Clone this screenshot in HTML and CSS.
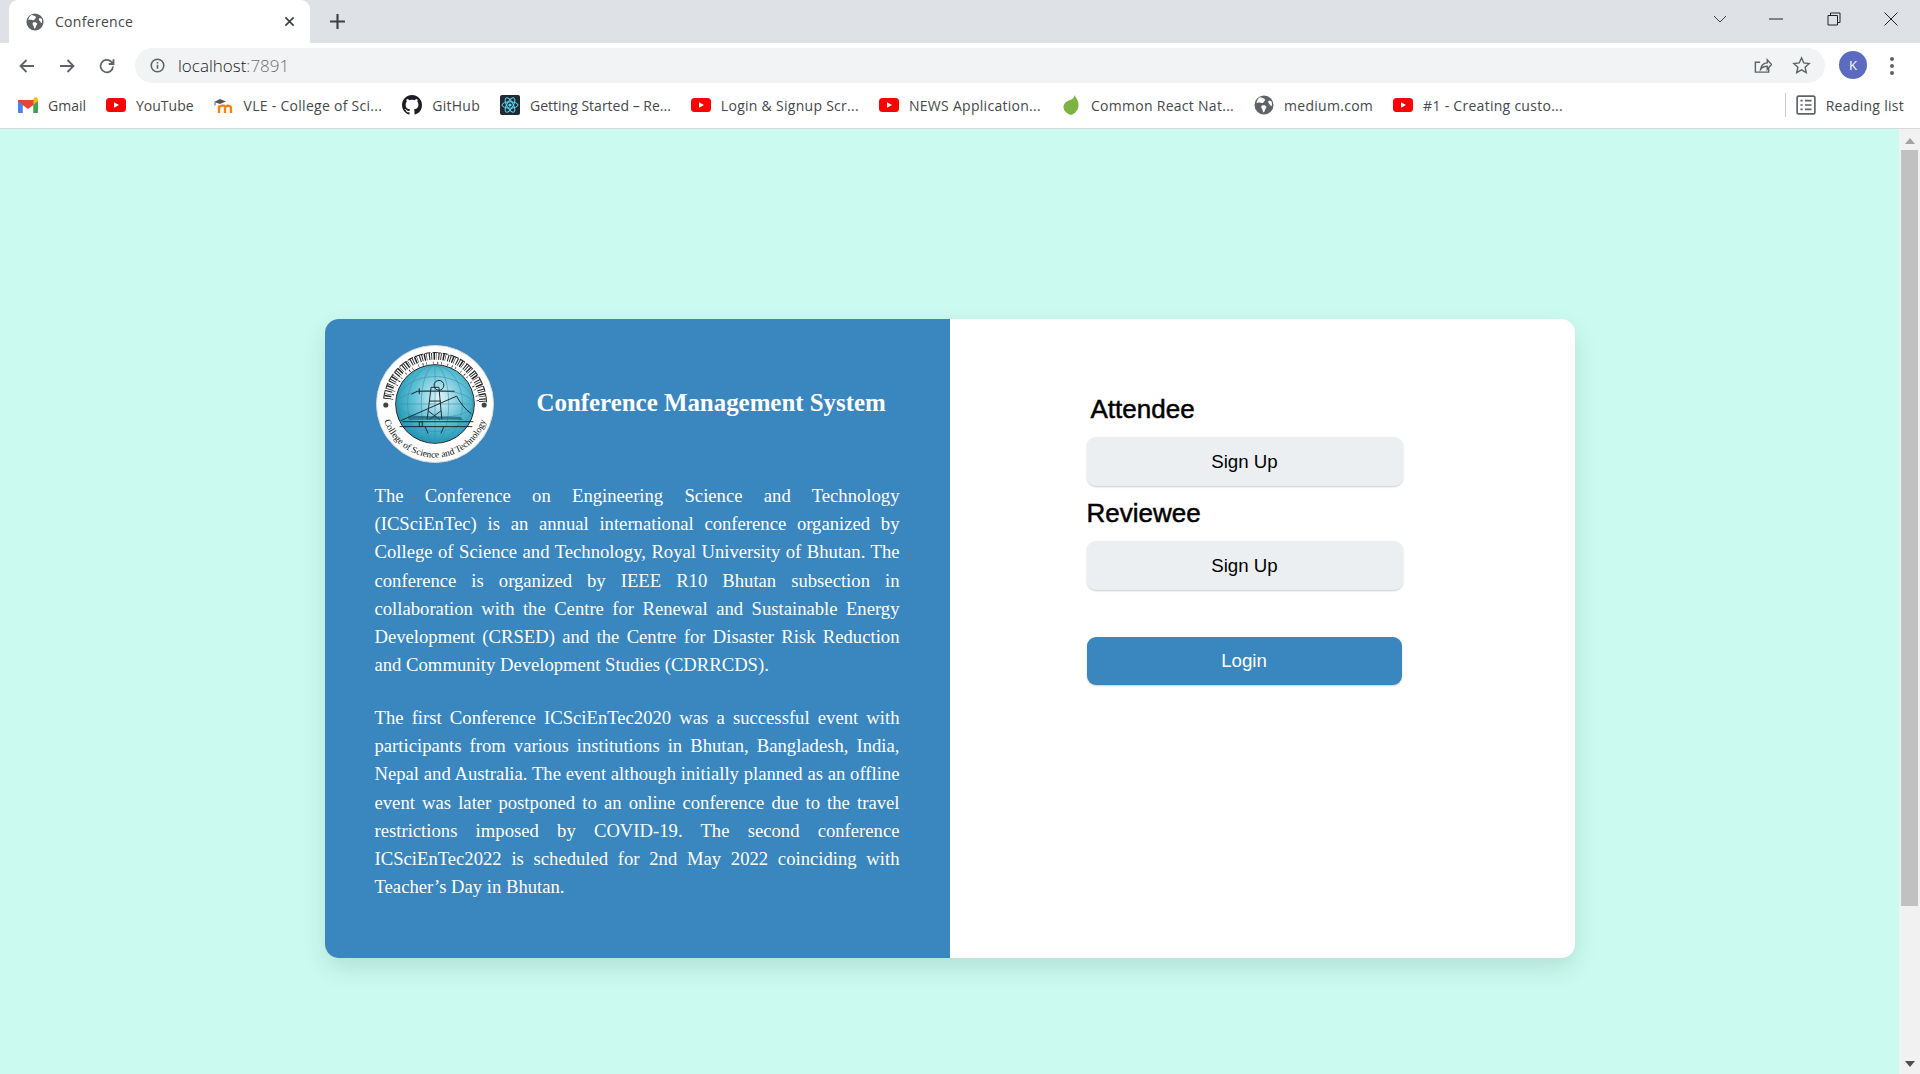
FILE: index.html
```html
<!DOCTYPE html>
<html lang="en">
<head>
<meta charset="utf-8">
<title>Conference</title>
<link rel="stylesheet" href="styles.css">
</head>
<body>
<svg class="defs" width="0" height="0" aria-hidden="true">
  <defs>
    <symbol id="globe" viewBox="0 0 20 20">
      <circle cx="10" cy="10" r="9.500" fill="#5f6368"/>
      <path d="M6 2.200c2 .3 4.400 1 5 2.300.5 1.200-1 1.700-1.500 2.700-.4 1-1.600 1-2.700.600C5.500 7.300 3.500 7.500 2.500 8 2.700 5.600 4 3.500 6 2.200zM8 10.500c1.500-.6 3.500 0 4.200 1 .7 1.200-.6 2-1 3-.3 1-.7 2.500-1.700 3-.8-1-.7-2.300-1.300-3.300-.6-1-1.600-3-.2-3.700zM14.500 6c1-.5 2.300-.3 3 .5.600 1.500.6 3.300 0 4.800-1-.4-1.500-1.700-2.300-2.500-.6-.8-1.500-2-.7-2.800z" fill="#fff"/>
    </symbol>
    <symbol id="yt" viewBox="0 0 20 14">
      <rect width="20" height="14" rx="3.500" fill="#f00"/>
      <path d="M8 4.200 13 7l-5 2.800z" fill="#fff"/>
    </symbol>
  </defs>
</svg>

<header class="tabstrip">
  <div class="tab">
    <svg class="ico16" viewBox="0 0 20 20"><use href="#globe"/></svg>
    <span class="tab-title">Conference</span>
    <svg class="tab-close" viewBox="0 0 12 12"><path d="M1.500 1.500l9 9M10.500 1.500l-9 9"/></svg>
  </div>
  <svg class="new-tab" viewBox="0 0 16 16"><path d="M8 1v14M1 8h14"/></svg>
  <div class="win-controls">
    <svg class="win-chevron" viewBox="0 0 14 8"><path d="M1 1l6 6 6-6"/></svg>
    <svg class="win-btn" viewBox="0 0 14 14"><path d="M0 7h14"/></svg>
    <svg class="win-btn" viewBox="0 0 14 14"><path d="M1 3.500h9.500V13H1zM3.500 3.500V1H13v9.500h-2.500"/></svg>
    <svg class="win-btn" viewBox="0 0 14 14"><path d="M.5.500l13 13M13.500.500l-13 13"/></svg>
  </div>
</header>

<nav class="toolbar">
  <svg class="nav-ico" viewBox="0 0 18 18"><path d="M16 9H3M8.500 3 2.500 9l6 6"/></svg>
  <svg class="nav-ico" viewBox="0 0 18 18"><path d="M2 9h13M9.500 3l6 6-6 6"/></svg>
  <svg class="nav-ico" viewBox="0 0 18 18"><path d="M15 9.500A6.200 6.200 0 1 1 13.200 4.700L15.500 7M15.500 2.200V7h-4.800"/></svg>
  <div class="omnibox">
    <svg class="info" viewBox="0 0 16 16"><circle cx="8" cy="8" r="6.700"/><path d="M8 7.200v4.300M8 4.300v1.600"/></svg>
    <span class="url">localhost<span class="url-port">:7891</span></span>
    <span class="spacer"></span>
    <svg class="omni-ico" viewBox="0 0 20 20"><path d="M16.500 12v5h-14V6.500h5M8 14c.5-4 3-6.500 7-6.800V4l4.500 5-4.500 5v-3.200c-3 0-5.300.9-7 3.200z"/></svg>
    <svg class="omni-ico" viewBox="0 0 20 20"><path d="m10 2 2.400 5.300 5.700.6-4.300 3.900 1.200 5.700L10 14.600l-5 2.900 1.200-5.700-4.300-3.900 5.700-.6z"/></svg>
  </div>
  <div class="avatar">K</div>
  <div class="kebab"><i></i><i></i><i></i></div>
</nav>

<div class="bookmarks">
  <a class="bm bm-flush">
    <svg class="bm-ico" viewBox="0 0 20 16"><path d="M0 3v11.500A1.500 1.500 0 0 0 1.500 16H4.500V8l5.500 4 5.500-4v8h3a1.500 1.500 0 0 0 1.500-1.500V3z" fill="#ea4335"/><path d="M0 4v10.500A1.500 1.500 0 0 0 1.500 16h3V7.500z" fill="#4285f4"/><path d="M15.500 7.500V16h3a1.500 1.500 0 0 0 1.500-1.500V4z" fill="#34a853"/><path d="M15.500 2.500v5L20 4V2.500C20 .7 18 -.5 16.500.5z" fill="#fbbc04"/></svg>
    Gmail
  </a>
  <a class="bm bm-flush"><svg class="bm-ico" viewBox="0 0 20 14"><use href="#yt"/></svg>YouTube</a>
  <a class="bm">
    <svg class="bm-ico" viewBox="0 0 20 16"><path d="M5 8.500V16M11 9c-4-1-6 .5-6 2.500M11 9v7M11 10c3-2 6-1.500 6 1.500V16" fill="none" stroke="#f98012" stroke-width="2.400"/><path d="M0 5l6-3 6 2.500L6 7z" fill="#555"/><path d="M1 5.500v3" stroke="#555"/></svg>
    VLE - College of Sci...
  </a>
  <a class="bm">
    <svg class="bm-ico" viewBox="0 0 16 16"><path fill="#1b1f23" d="M8 0C3.580 0 0 3.580 0 8c0 3.540 2.290 6.530 5.470 7.590.4.070.55-.17.55-.38 0-.19-.01-.82-.01-1.490-2.010.370-2.530-.49-2.690-.94-.09-.23-.48-.94-.82-1.130-.28-.15-.68-.52-.01-.53.63-.01 1.080.58 1.230.82.720 1.210 1.870.87 2.330.66.070-.52.280-.87.510-1.070-1.780-.2-3.640-.89-3.640-3.950 0-.87.310-1.590.820-2.150-.08-.2-.36-1.020.08-2.120 0 0 .67-.21 2.200.82.640-.18 1.320-.27 2-.27s1.360.09 2 .27c1.530-1.040 2.200-.82 2.200-.82.440 1.100.160 1.920.080 2.120.510.560.820 1.270.820 2.150 0 3.070-1.870 3.750-3.650 3.950.290.250.540.730.540 1.480 0 1.070-.01 1.930-.01 2.200 0 .21.150.46.550.38A8.010 8.010 0 0 0 16 8c0-4.420-3.580-8-8-8z"/></svg>
    GitHub
  </a>
  <a class="bm bm-flush">
    <svg class="bm-ico" viewBox="0 0 20 20"><rect width="20" height="20" rx="2" fill="#1f2a33"/><g fill="none" stroke="#61dafb" stroke-width="1"><ellipse cx="10" cy="10" rx="8" ry="3.200"/><ellipse cx="10" cy="10" rx="8" ry="3.200" transform="rotate(60 10 10)"/><ellipse cx="10" cy="10" rx="8" ry="3.200" transform="rotate(120 10 10)"/></g><circle cx="10" cy="10" r="1.600" fill="#61dafb"/></svg>
    Getting Started – Re...
  </a>
  <a class="bm"><svg class="bm-ico" viewBox="0 0 20 14"><use href="#yt"/></svg>Login &amp; Signup Scr...</a>
  <a class="bm"><svg class="bm-ico" viewBox="0 0 20 14"><use href="#yt"/></svg>NEWS Application...</a>
  <a class="bm">
    <svg class="bm-ico" viewBox="0 0 20 20"><path d="M13.500 0C15 3 18 6 17.500 11c-.4 4.500-4 8-7.500 9-3-1-7-3-7.500-7.500C2.200 9.500 5 6 9 5c2.500-.7 4.500-2.500 4.500-5z" fill="#7cb342"/></svg>
    Common React Nat...
  </a>
  <a class="bm"><svg class="bm-ico" viewBox="0 0 20 20"><use href="#globe"/></svg>medium.com</a>
  <a class="bm"><svg class="bm-ico" viewBox="0 0 20 14"><use href="#yt"/></svg>#1 - Creating custo...</a>
  <span class="spacer"></span>
  <span class="bm-divider"></span>
  <a class="bm reading">
    <svg class="bm-ico" viewBox="0 0 18 18"><rect x="1" y="1" width="16" height="16" rx="1.500" fill="none" stroke="#5f6368" stroke-width="1.500"/><path d="M4 5h2M8 5h6M4 9h2M8 9h6M4 13h2M8 13h6" stroke="#5f6368" stroke-width="1.500"/></svg>
    Reading list
  </a>
</div>

<div class="viewport">
  <main class="page">
    <section class="card">
      <div class="panel">
        <div class="brand">
          <svg class="logo" viewBox="0 0 120 120" role="img" aria-label="College of Science and Technology">
            <defs>
              <radialGradient id="sea" cx="55%" cy="42%" r="60%">
                <stop offset="0" stop-color="#e4f6fa"/>
                <stop offset=".55" stop-color="#5fc0d6"/>
                <stop offset="1" stop-color="#1b93b3"/>
              </radialGradient>
              <path id="arc-bottom" d="M5.500 60a54.500 54.500 0 0 0 109 0"/>
            </defs>
            <circle cx="60" cy="60" r="59.500" fill="#fff" stroke="#d8d8d8"/>
            <circle cx="60" cy="60" r="40" fill="url(#sea)" stroke="#222"/>
            <g fill="none" stroke="#3d8ea6" stroke-width=".6">
              <ellipse cx="60" cy="60" rx="39" ry="14"/>
              <ellipse cx="60" cy="60" rx="39" ry="28"/>
              <ellipse cx="60" cy="60" rx="14" ry="39"/>
              <ellipse cx="60" cy="60" rx="28" ry="39"/>
              <path d="M21 60h78M60 21v78"/>
            </g>
            <g fill="none" stroke="#1b2a30" stroke-width="1">
              <path d="M25 77 82 52c3 6 9 14 15 18M27 78h72M24 83h74"/>
              <path d="M52 76l4-33h8l3 33M53 67l12 9M66 67l-12 9M54 57h12M42 47h38M44 44v6M36 50l6-3"/>
              <circle cx="64" cy="41" r="5"/>
              <path d="M44 78v5h3v-5zM50 83l3 7M69 83l-3 7"/>
            </g>
            <path d="M33 72v4h56l-4-3z" fill="#104a5d" opacity=".6"/>
            <g fill="none" stroke="#222" transform="rotate(6 60 60)">
              <path d="M7.500 60A52.500 52.500 0 0 1 112 53" stroke-width="1" stroke-dasharray="9 1.500 6 2"/>
              <path d="M11.500 60A48.500 48.500 0 0 1 108 53" stroke-width="7" stroke-dasharray=".9 1.400 1.500 .9 .6 2 1.100 1.200"/>
              <path d="M16 60A44 44 0 0 1 103 53" stroke-width="2.500" stroke-dasharray=".6 4 .9 3 .6 6"/>
            </g>
            <circle cx="10" cy="61" r="2.600" fill="#444"/>
            <circle cx="110" cy="61" r="2.600" fill="#444"/>
            <text class="logo-text"><textPath href="#arc-bottom" startOffset="50%" text-anchor="middle">College of Science and Technology</textPath></text>
          </svg>
          <h1 class="brand-title">Conference Management System</h1>
        </div>
        <p class="about">The Conference on Engineering Science and Technology (ICSciEnTec) is an annual international conference organized by College of Science and Technology, Royal University of Bhutan. The conference is organized by IEEE R10 Bhutan subsection in collaboration with the Centre for Renewal and Sustainable Energy Development (CRSED) and the Centre for Disaster Risk Reduction and Community Development Studies (CDRRCDS).</p>
        <p class="about">The first Conference ICSciEnTec2020 was a successful event with participants from various institutions in Bhutan, Bangladesh, India, Nepal and Australia. The event although initially planned as an offline event was later postponed to an online conference due to the travel restrictions imposed by COVID-19. The second conference ICSciEnTec2022 is scheduled for 2nd May 2022 coinciding with Teacher’s Day in Bhutan.</p>
      </div>
      <div class="actions">
        <h2 class="role role-attendee">Attendee</h2>
        <button class="btn btn-light">Sign Up</button>
        <h2 class="role role-reviewee">Reviewee</h2>
        <button class="btn btn-light">Sign Up</button>
        <button class="btn btn-primary">Login</button>
      </div>
    </section>
  </main>
  <div class="scrollbar">
    <span class="arrow arrow-up"></span>
    <span class="thumb"></span>
    <span class="arrow arrow-down"></span>
  </div>
</div>
</body>
</html>
```

FILE: styles.css
```css
* { box-sizing: border-box; }
html, body { margin: 0; height: 100%; overflow: hidden; }
body {
  display: flex;
  flex-direction: column;
  font-family: "Open Sans", "Noto Sans", sans-serif;
  background: #fff;
}
.defs { position: absolute; }
.spacer { flex: 1; }

/* Tab strip */
.tabstrip {
  height: 43px;
  background: #dee1e6;
  display: flex;
  align-items: center;
  padding-left: 9px;
  flex: none;
}
.tab {
  width: 301px;
  height: 43px;
  background: #fff;
  border-radius: 9px 9px 0 0;
  display: flex;
  align-items: center;
  padding: 0 15px 0 17px;
  color: #45484c;
  font-size: 14px;
}
.ico16 { width: 18px; height: 18px; flex: none; }
.tab-title { margin-left: 11px; margin-bottom: 1px; flex: 1; letter-spacing: .3px; }
.tab-close { width: 11px; height: 11px; fill: none; stroke: #3c4043; stroke-width: 1.800; }
.new-tab { width: 17px; height: 17px; margin-left: 19px; fill: none; stroke: #3c4043; stroke-width: 2; }
.win-controls {
  margin-left: auto;
  display: flex;
  align-items: center;
  height: 38px;
  align-self: flex-start;
  padding-right: 22px;
}
.win-chevron { width: 14px; height: 8px; fill: none; stroke: #3c4043; stroke-width: 1; margin-right: 42px; }
.win-btn { width: 14px; height: 14px; margin-left: 43.500px; fill: none; stroke: #222; stroke-width: 1; }
.win-chevron + .win-btn { margin-left: 0; }

/* Toolbar */
.toolbar {
  height: 40px;
  flex: none;
  padding: 0 26px 0 18px;
  display: flex;
  align-items: flex-start;
  background: #fff;
  gap: 22px;
}
.nav-ico { width: 18px; height: 18px; margin-top: 14px; fill: none; stroke: #5f6368; stroke-width: 1.800; flex: none; }
.omnibox {
  flex: 1;
  height: 35px;
  margin: 5px 0 0 -3px;
  background: #f1f3f4;
  border-radius: 18px;
  display: flex;
  align-items: center;
  padding: 0 14px 0 15px;
}
.info { width: 15px; height: 15px; fill: none; stroke: #5f6368; stroke-width: 1.700; flex: none; }
.url { margin-left: 13px; font-size: 17px; font-weight: 300; color: #202124; }
.url-port { color: #6b6e72; }
.omni-ico { width: 19px; height: 19px; fill: none; stroke: #5f6368; stroke-width: 1.500; margin-left: 20px; }
.avatar {
  width: 28px;
  height: 28px;
  margin: 8px 0 0 -8px;
  border-radius: 50%;
  background: #5c6bc0;
  color: #fff;
  font-size: 13px;
  display: flex;
  align-items: center;
  justify-content: center;
  flex: none;
}
.kebab {
  width: 4px;
  margin: 14px 0 0 1px;
  display: flex;
  flex-direction: column;
  gap: 3px;
  flex: none;
}
.kebab i { width: 4px; height: 4px; border-radius: 50%; background: #5f6368; }

/* Bookmarks */
.bookmarks {
  height: 46px;
  flex: none;
  display: flex;
  align-items: center;
  padding: 0 16px 1px 18px;
  gap: 20px;
  background: #fff;
  border-bottom: 1px solid #d5dadd;
  font-size: 14px;
  color: #45484c;
}
.bm { display: flex; align-items: center; gap: 10px; white-space: nowrap; letter-spacing: .28px; }
.bm-flush { letter-spacing: 0; }
.bm-ico { width: 20px; height: 20px; flex: none; }
.bm-divider { width: 1px; height: 24px; background: #c8ccd0; }
.reading { margin-left: -10px; }

/* Page */
.viewport { flex: 1; display: flex; min-height: 0; }
.page {
  flex: 1;
  background: #cbfbf0;
  padding-top: 190px;
  display: flex;
  justify-content: center;
  align-items: flex-start;
}
.card {
  width: 1250px;
  height: 639px;
  display: flex;
  background: #fff;
  border-radius: 14px;
  overflow: hidden;
  box-shadow: 0 10px 25px rgba(0, 0, 0, .11);
}
.panel {
  width: 625px;
  flex: none;
  background: #3a86be;
  color: #fff;
  padding: 26px 50px 0;
  font-family: "Liberation Serif", serif;
}
.brand { display: flex; align-items: center; height: 118px; margin-bottom: 19px; }
.logo { width: 118px; height: 118px; margin-left: 1px; flex: none; }
.logo-text { font: 9.600px "Liberation Serif", serif; fill: #111; }
.brand-title { margin: 0 0 2px 43px; font-size: 24.900px; font-weight: 700; white-space: nowrap; }
.about {
  margin: 0 0 24.500px;
  font-size: 18.670px;
  line-height: 28.200px;
  text-align: justify;
}
.actions {
  flex: 1;
  padding: 72px 0 0 137px;
  font-family: "Liberation Sans", sans-serif;
  display: flex;
  flex-direction: column;
  align-items: flex-start;
}
.role { margin: 0; font-size: 26px; font-weight: 500; line-height: 36px; color: #000; -webkit-text-stroke: .5px #000; }
.role-attendee { margin: 0 0 10px 4px; }
.role-reviewee { margin: 9px 0 10px; }
.btn {
  width: 316px;
  height: 49px;
  border: 0;
  border-radius: 9px;
  font: 18.700px "Liberation Sans", sans-serif;
  box-shadow: 0 1px 2px rgba(0, 0, 0, .2);
}
.btn-light { background: #eceff2; color: #000; }
.btn-primary { width: 315px; height: 48px; background: #3a86be; color: #fff; margin-top: 47px; }

/* Scrollbar */
.scrollbar {
  width: 21px;
  flex: none;
  background: #f1f1f1;
  display: flex;
  flex-direction: column;
  align-items: center;
  padding: 9px 0 7px;
}
.arrow { width: 0; height: 0; border-left: 5px solid transparent; border-right: 5px solid transparent; flex: none; }
.arrow-up { border-bottom: 6px solid #a3a3a3; }
.arrow-down { border-top: 6px solid #505050; margin-top: auto; }
.thumb { width: 17px; height: 756px; margin-top: 6px; background: #c1c1c1; flex: none; }
```
